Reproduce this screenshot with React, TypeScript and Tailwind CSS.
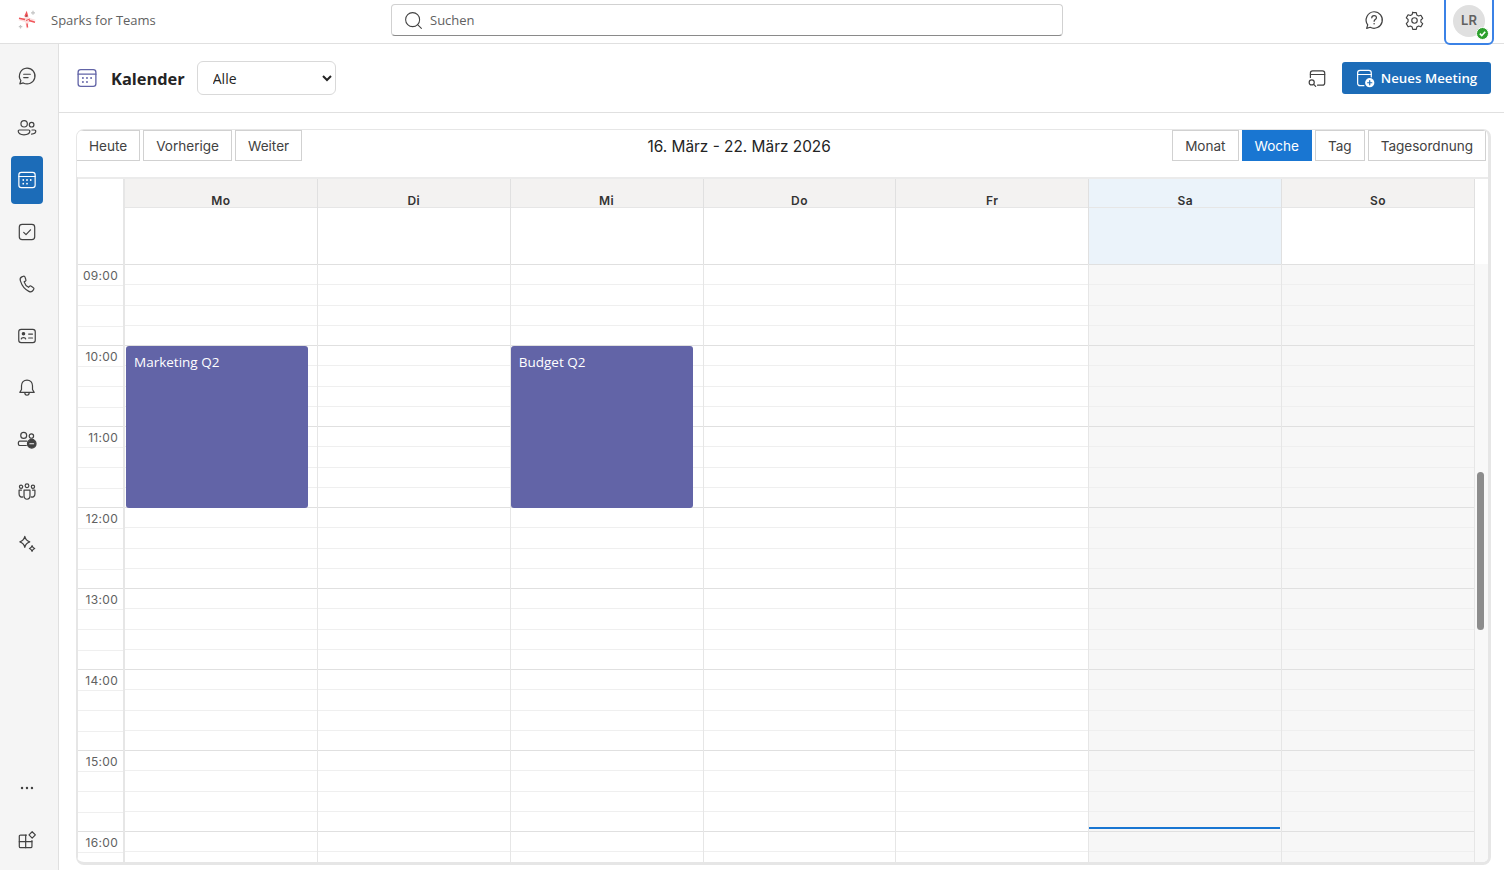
import { Search } from "lucide-react"
import type { ReactNode } from "react"

const days = ["Mo", "Di", "Mi", "Do", "Fr", "Sa", "So"]
const hours = ["09:00", "10:00", "11:00", "12:00", "13:00", "14:00", "15:00", "16:00"]
const slots = [0, 1, 2, 3]

function Icon({ children, size = 18, className = "" }: { children: ReactNode; size?: number; className?: string }) {
  return (
    <svg width={size} height={size} viewBox="0 0 20 20" fill="none" stroke="currentColor" strokeWidth="1.1" strokeLinecap="round" strokeLinejoin="round" className={className}>
      {children}
    </svg>
  )
}

const CalendarGlyph = () => (
  <>
    <rect x="2.600" y="3" width="14.800" height="14" rx="2.200" />
    <path d="M2.600 6.800h14.800" />
    <circle cx="6.600" cy="10" r=".8" fill="currentColor" stroke="none" />
    <circle cx="10" cy="10" r=".8" fill="currentColor" stroke="none" />
    <circle cx="13.400" cy="10" r=".8" fill="currentColor" stroke="none" />
    <circle cx="6.600" cy="13.400" r=".8" fill="currentColor" stroke="none" />
    <circle cx="10" cy="13.400" r=".8" fill="currentColor" stroke="none" />
  </>
)

const navTop: { key: string; active?: boolean; glyph: ReactNode }[] = [
  {
    key: "chat",
    glyph: (
      <>
        <path d="M10 2.800a7.200 7.200 0 1 1-3.400 13.500l-3.100.9.9-3.100A7.200 7.200 0 0 1 10 2.800Z" />
        <path d="M7 8.400h6M7 11.400h4" />
      </>
    ),
  },
  {
    key: "team",
    glyph: (
      <>
        <circle cx="7.400" cy="6.200" r="2.900" />
        <circle cx="14.200" cy="7" r="2.100" />
        <path d="M3 11.800h8.600c.6 0 1 .4 1 1 0 2-2 3.400-5.400 3.400S2 14.800 2 12.800c0-.6.4-1 1-1Z" />
        <path d="M14.500 11.800h2.300c.6 0 1.200.4 1.200 1 0 1.700-1.500 2.700-3.900 2.700" />
      </>
    ),
  },
  { key: "calendar", active: true, glyph: <CalendarGlyph /> },
  {
    key: "tasks",
    glyph: (
      <>
        <rect x="3" y="3" width="14" height="14" rx="2.600" />
        <path d="m7 10.300 2.100 2.100L13.200 8" />
      </>
    ),
  },
  {
    key: "calls",
    glyph: <path d="M6.800 2.900 5.300 3.500C3.900 4.100 3.500 5.600 4 7.200c1.300 4.200 3.900 7.700 7.700 9.500 1.500.7 3 .4 3.800-.9l.6-1c.3-.5.2-1.100-.3-1.400l-2.200-1.500c-.4-.3-1-.2-1.400.2l-.8.900c-1.900-.9-3.400-3-4-5l1.100-.6c.5-.3.700-.8.500-1.300L8.100 3.500c-.2-.5-.8-.8-1.300-.6Z" />,
  },
  {
    key: "contacts",
    glyph: (
      <>
        <rect x="2.500" y="4" width="15" height="12" rx="2.200" />
        <circle cx="6.800" cy="8" r="1.100" fill="currentColor" />
        <path d="M4.800 12.600c.2-1.500 3.800-1.500 4 0M11.500 8.200h3.500M11.500 11.800h3.500" />
      </>
    ),
  },
  {
    key: "alerts",
    glyph: (
      <>
        <path d="M10 2.800c-3 0-5 2.200-5 5.200v3.300l-1.500 2.700h13L15 11.300V8c0-3-2-5.200-5-5.200Z" />
        <path d="M8 14.400c0 1.300.8 2.200 2 2.200s2-.9 2-2.200" />
      </>
    ),
  },
  {
    key: "people",
    glyph: (
      <>
        <circle cx="7" cy="5.800" r="2.700" />
        <circle cx="14" cy="6.400" r="2" />
        <path d="M3.400 11h6.600M3.400 11c-1.700 0-1.700 4 0 4h6" />
        <circle cx="14.300" cy="13.400" r="3.900" fill="currentColor" />
        <path d="M12.600 13.400h3.400" stroke="#f5f5f5" />
      </>
    ),
  },
  {
    key: "community",
    glyph: (
      <>
        <circle cx="10" cy="4.400" r="1.700" />
        <circle cx="4.600" cy="5.200" r="1.500" />
        <circle cx="15.400" cy="5.200" r="1.500" />
        <path d="M7.300 8.200h5.400v5.300c0 4.100-5.400 4.100-5.400 0V8.200Z" />
        <path d="M5 8.200H2.800v3.600c0 2.400 2 3.100 3.500 2.600M15 8.200h2.200v3.600c0 2.400-2 3.100-3.500 2.600" />
      </>
    ),
  },
  {
    key: "sparkle",
    glyph: (
      <>
        <path d="M8 3C8.600 5.600 10 7.200 12.500 8 10 8.800 8.600 10.400 8 13 7.400 10.400 6 8.800 3.500 8 6 7.200 7.400 5.600 8 3Z" />
        <path d="M14.600 11.500c.3 1.300 1 2.100 2.400 2.600-1.400.5-2.100 1.300-2.400 2.600-.3-1.300-1-2.100-2.400-2.600 1.400-.5 2.100-1.300 2.400-2.600Z" />
      </>
    ),
  },
]

function NavItem({ glyph, active }: { glyph: ReactNode; active?: boolean }) {
  return (
    <div className={`flex h-[48px] w-[32px] items-center justify-center rounded-[4px] ${active ? "bg-[#1c6cb8] text-white" : "text-[#424242]"}`}>
      <Icon size={22}>{glyph}</Icon>
    </div>
  )
}

function ToolButton({ label, active }: { label: string; active?: boolean }) {
  return (
    <button className={`flex h-[31px] items-center border px-3 pt-px text-[13.550px] ${active ? "border-[#1976d2] bg-[#1976d2] text-white" : "border-[#d1d1d1] bg-white text-[#424242]"}`}>
      {label}
    </button>
  )
}

function DayColumn({ index }: { index: number }) {
  const weekend = index > 4
  return (
    <div className={`relative min-w-0 flex-1 border-r border-[#e6e6e6] ${weekend ? "bg-[#f7f7f7]" : "bg-white"}`}>
      {hours.map((h) => (
        <div key={h}>
          {slots.map((s) => (
            <div key={s} className={`h-[20.250px] border-t ${s === 0 ? "border-[#e0e0e0]" : "border-[#efefef]"}`} />
          ))}
        </div>
      ))}
      {index === 0 && (
        <div className="absolute left-[1px] top-[82px] h-[162px] w-[182px] rounded-[3px] bg-[#6264a7] px-2 py-[7px] font-['Open_Sans',sans-serif] text-[13.500px] leading-[18px] text-white">Marketing Q2</div>
      )}
      {index === 2 && (
        <div className="absolute left-0 top-[82px] h-[162px] w-[182px] rounded-[3px] bg-[#6264a7] px-2 py-[7px] font-['Open_Sans',sans-serif] text-[13.500px] leading-[18px] text-white">Budget Q2</div>
      )}
      {index === 5 && <div className="absolute left-0 right-[1px] top-[563px] h-[2px] bg-[#1976d2]" />}
    </div>
  )
}

export default function App() {
  return (
    <div className="flex h-[870px] w-full flex-col overflow-hidden bg-white font-['Inter',sans-serif] text-[#242424]">
      <div className="flex h-[44px] shrink-0 items-center border-b border-[#e0e0e0] pb-[3px]">
        <div className="flex w-[391px] items-center pl-[17px]">
          <svg width="20" height="22" viewBox="0 0 20 22">
            <path d="M10 2 11.800 8.700 19 11l-7.200 2L10 20.500 8.200 13 1 11l7.200-2.300L10 2Z" fill="#fcdcdc" />
            <path d="M2 9.300 8 10.500M12 11.500l6 1.800M8 7.500l1.500-3.500 1 3.500M10 14.500l.5 4" stroke="#f0555a" strokeWidth="1.500" />
            <path d="M9 11.500 13 10" stroke="#f0555a" strokeWidth="1" />
            <path d="M16 1.800v4M14 3.800h4M3.500 16v3.500M1.800 17.700h3.500" stroke="#c4c4c4" strokeWidth="1.200" />
          </svg>
          <span className="ml-[14px] pt-px font-['Open_Sans',sans-serif] text-[13px] text-[#616161]">Sparks for Teams</span>
        </div>
        <div className="flex h-[32px] w-[672px] items-center rounded-[4px] border border-[#d1d1d1] border-b-[#8a8a8a] pl-[11px]">
          <Search size={21} strokeWidth={1.200} className="text-[#424242]" />
          <span className="ml-[6px] pt-px font-['Open_Sans',sans-serif] text-[13px] text-[#616161]">Suchen</span>
        </div>
        <div className="ml-auto flex items-center">
          <Icon size={22} className="mr-[19px] text-[#424242]">
            <path d="M10 2.500a7.500 7.500 0 1 1-3.500 14.100l-3.200 1 1-3.200A7.500 7.500 0 0 1 10 2.500Z" />
            <path d="M8 8c0-2.700 4.200-2.700 4.200-.1 0 1.700-2.100 1.700-2.100 3.300" />
            <circle cx="10.100" cy="13.500" r=".7" fill="currentColor" stroke="none" />
          </Icon>
          <Icon size={21} className="mr-[19px] text-[#424242]">
            <path d="m8.300 2.500 3.400 0 .5 2.200 1.700 1 2.200-.7 1.700 3-1.700 1.500v2l1.700 1.500-1.700 3-2.200-.7-1.700 1-.5 2.200H8.300l-.5-2.200-1.700-1-2.200.7-1.700-3L3.900 11V9L2.200 7.500l1.700-3 2.200.7 1.700-1 .5-2.200Z" />
            <circle cx="10" cy="10" r="2.600" />
          </Icon>
          <div className="relative -mb-[3px] mr-[10px] flex h-[47px] w-[50px] items-center justify-center rounded-b-[6px] border-2 border-[#3b82e6] pb-[2px]">
            <div className="flex h-[32px] w-[32px] items-center justify-center rounded-full bg-[#e0e0e0] text-[13px] font-semibold text-[#616161]">LR</div>
            <div className="absolute bottom-[3px] right-[3px] flex h-[13px] w-[13px] items-center justify-center rounded-full border border-white bg-[#2ea02e]">
              <svg width="9" height="9" viewBox="0 0 10 10" fill="none" stroke="white" strokeWidth="1.800"><path d="m2 5.200 2.200 2.200L8 3" /></svg>
            </div>
          </div>
        </div>
      </div>

      <div className="flex min-h-0 flex-1">
        <div className="flex w-[59px] shrink-0 flex-col items-center gap-[4px] border-r border-[#e0e0e0] bg-[#f5f5f5] pb-[6px] pr-[5px] pt-[8px]">
          {navTop.map((n) => (
            <NavItem key={n.key} glyph={n.glyph} active={n.active} />
          ))}
          <div className="mt-auto">
            <NavItem
              glyph={
                <>
                  <circle cx="5.500" cy="10" r="1.100" fill="currentColor" stroke="none" />
                  <circle cx="10" cy="10" r="1.100" fill="currentColor" stroke="none" />
                  <circle cx="14.500" cy="10" r="1.100" fill="currentColor" stroke="none" />
                </>
              }
            />
          </div>
          <NavItem
            glyph={
              <>
                <path d="M9.500 5.500H4.200c-.7 0-1.200.5-1.200 1.200v9.100c0 .7.500 1.200 1.200 1.200h9.100c.7 0 1.200-.5 1.200-1.200v-5.300" />
                <path d="M3 11.500h11.500M8.800 5.500V17" />
                <path d="m14.700 2.500 2.900 2.900-2.900 2.900-2.900-2.900 2.900-2.900Z" />
              </>
            }
          />
        </div>

        <div className="flex min-w-0 flex-1 flex-col">
          <div className="flex h-[69px] shrink-0 items-center border-b border-[#e0e0e0] pl-[16px] pr-[13px]">
            <Icon size={24} className="text-[#6264a7]"><CalendarGlyph /></Icon>
            <h1 className="ml-[12px] pt-[2px] font-['Open_Sans',sans-serif] text-[16.400px] font-bold">Kalender</h1>
            <select defaultValue="Alle" className="ml-[12px] h-[34px] w-[139px] rounded-[6px] border border-[#d9d9d9] bg-white pl-[11px] font-['Open_Sans',sans-serif] text-[14px] text-[#242424]">
              <option>Alle</option>
            </select>
            <Icon size={22} className="ml-auto mr-[14px] text-[#424242]">
              <path d="M4 9.500V5.500c0-1.200.8-2 2-2h9c1.200 0 2 .8 2 2v9c0 1.200-.8 2-2 2h-4.500" />
              <path d="M4 6.800h13" />
              <circle cx="5.200" cy="14" r="2.300" />
              <path d="m7 15.800 1.800 1.800" />
            </Icon>
            <button className="flex h-[32px] w-[149px] items-center justify-center gap-[5px] rounded-[3px] bg-[#1c6cb8] pr-[2px] font-['Open_Sans',sans-serif] text-[13.300px] font-semibold text-white">
              <Icon size={22}>
                <path d="M9 17H5.500c-1.300 0-2.200-.9-2.200-2.200V5.200C3.300 3.900 4.200 3 5.500 3h8c1.300 0 2.200.9 2.200 2.200V9" />
                <path d="M3.300 6.800h12.400" />
                <circle cx="14.300" cy="14.300" r="4.200" fill="white" stroke="none" />
                <path d="M14.300 12.400v3.800M12.400 14.300h3.800" stroke="#1c6cb8" />
              </Icon>
              <span className="pt-px">Neues Meeting</span>
            </button>
          </div>

          <div className="flex min-h-0 flex-1 pb-[5px] pl-[17px] pr-[13px] pt-[16px]">
            <div className="flex min-w-0 flex-1 flex-col overflow-hidden rounded-[8px] border border-b-[3px] border-r-[3px] border-[#e6e6e6]">
              <div className="-ml-px flex h-[31px] shrink-0 items-center justify-between pr-[2px]">
                <div className="flex gap-[3px]">
                  <ToolButton label="Heute" />
                  <ToolButton label="Vorherige" />
                  <ToolButton label="Weiter" />
                </div>
                <h2 className="ml-[4px] pt-[2px] text-[15.400px] text-[#242424]">16. März - 22. März 2026</h2>
                <div className="flex gap-[3px]">
                  <ToolButton label="Monat" />
                  <ToolButton label="Woche" active />
                  <ToolButton label="Tag" />
                  <ToolButton label="Tagesordnung" />
                </div>
              </div>

              <div className="mt-[16px] flex min-h-0 flex-1 flex-col border-l border-[#e6e6e6]">
                <div className="flex h-[87px] shrink-0 border-t-2 border-[#ebebeb] pr-[13px]">
                  <div className="w-[47px] shrink-0 border-r-2 border-[#e6e6e6]" />
                  {days.map((d, i) => (
                    <div key={d} className="flex min-w-0 flex-1 flex-col border-r border-[#e0e0e0]">
                      <div className={`flex h-[28px] items-end justify-center text-[12px] font-semibold tracking-[0.5px] text-[#333] ${i === 5 ? "bg-[#ebf3fa]" : "bg-[#f3f2f1]"}`}>
                        <span className="leading-[13px]">{d}</span>
                      </div>
                      <div className={`flex-1 border-t border-[#e6e6e6] ${i === 5 ? "bg-[#ebf3fa]" : "bg-white"}`} />
                    </div>
                  ))}
                </div>
                <div className="flex min-h-0 flex-1 overflow-hidden">
                  <div className="w-[47px] shrink-0 border-r-2 border-[#e6e6e6]">
                    {hours.map((h) => (
                      <div key={h} className="h-[81px] border-t border-[#e0e0e0]">
                        <div className="pr-[5px] pt-[3px] text-right text-[12px] leading-[16px] tracking-[0.3px] text-[#616161]">{h}</div>
                        <div className="mt-[1px] h-[20.250px] border-t border-[#efefef]" />
                        <div className="h-[20.250px] border-t border-[#efefef]" />
                        <div className="h-[20.250px] border-t border-[#efefef]" />
                      </div>
                    ))}
                  </div>
                  {days.map((d, i) => (
                    <DayColumn key={d} index={i} />
                  ))}
                  <div className="relative w-[13px] shrink-0 bg-[#f8f8f8]">
                    <div className="absolute left-[2px] top-[208px] h-[158px] w-[7px] rounded-full bg-[#8c8c8c]" />
                  </div>
                </div>
              </div>
            </div>
          </div>
        </div>
      </div>
    </div>
  )
}
